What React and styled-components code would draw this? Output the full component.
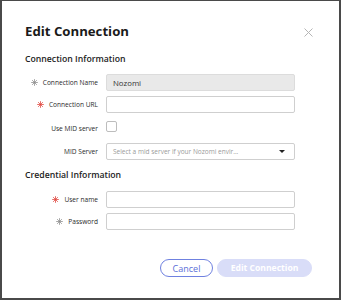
import React from "react";
import styled, { createGlobalStyle } from "styled-components";

const Global = createGlobalStyle`
  html, body {
    margin: 0;
    padding: 0;
    background: #ffffff;
  }
  body {
    font-family: "Open Sans", "Noto Sans", sans-serif;
  }
`;

const Frame = styled.div`
  box-sizing: border-box;
  width: 341px;
  height: 300px;
  border-style: solid;
  border-color: #4a4a4a;
  border-width: 1px 2px 2px 2px;
  background: #fff;
  padding: 0 0 0 23px;
  display: flex;
  flex-direction: column;
`;

const Header = styled.div`
  display: flex;
  align-items: center;
  justify-content: space-between;
  height: 20px;
  margin-top: 20px;
  padding-right: 26px;
`;

const Title = styled.h1`
  margin: 0;
  font-size: 13.2px;
  line-height: 20px;
  font-weight: 700;
  color: #1a1a1a;
`;

const Close = styled.button`
  border: 0;
  background: none;
  padding: 0;
  width: 9px;
  height: 9px;
  display: flex;
  margin-top: 2px;
  cursor: pointer;
`;

const Section = styled.h2`
  margin: ${(p) => p.$top}px 0 0 0;
  font-size: 8.7px;
  line-height: 16px;
  font-weight: 600;
  color: #222;
`;

const Rows = styled.div`
  display: grid;
  grid-template-columns: 73px 189px;
  column-gap: 8px;
  row-gap: 5px;
  margin-top: ${(p) => p.$top}px;
  align-items: center;
`;

const Label = styled.label`
  display: flex;
  align-items: center;
  justify-content: flex-end;
  gap: 5px;
  font-size: 6.6px;
  color: #2a2a2a;
  height: ${(p) => p.$h || 17}px;
  white-space: nowrap;
`;

const Star = styled.svg`
  width: 7px;
  height: 7px;
  flex: none;
`;

const Input = styled.div`
  box-sizing: border-box;
  height: 17px;
  border: 1px solid ${(p) => (p.$disabled ? "#dcdcdc" : "#cfcfcf")};
  background: ${(p) => (p.$disabled ? "#e9e9e9" : "#fff")};
  border-radius: 2px;
  padding: 0 6px;
  display: flex;
  align-items: center;
  font-size: 7.8px;
  color: #333;
`;

const Select = styled(Input)`
  justify-content: space-between;
  color: #9a9a9a;
  font-size: 6.5px;
`;

const Caret = styled.span`
  width: 0;
  height: 0;
  border-left: 3px solid transparent;
  border-right: 3px solid transparent;
  border-top: 3.5px solid #222;
  margin-right: 3px;
`;

const Check = styled.div`
  box-sizing: border-box;
  width: 11px;
  height: 11px;
  border: 1px solid #bdbdbd;
  border-radius: 2px;
  background: #fff;
  align-self: start;
  margin-top: 3px;
`;

const Footer = styled.div`
  display: flex;
  gap: 4px;
  margin-top: 29px;
  margin-left: 135px;
`;

const Btn = styled.button`
  box-sizing: border-box;
  height: 18px;
  border-radius: 9px;
  padding: 0;
  width: ${(p) => p.$w}px;
  font-family: inherit;
  font-size: ${(p) => (p.$primary ? 8.6 : 9)}px;
  font-weight: ${(p) => (p.$primary ? 700 : 400)};
  color: ${(p) => (p.$primary ? "#ffffff" : "#5b6fd8")};
  background: ${(p) => (p.$primary ? "#d9ddf8" : "#fff")};
  border: 1px solid ${(p) => (p.$primary ? "#d9ddf8" : "#6f81e0")};
  cursor: pointer;
`;

function Asterisk({ red }) {
  const c = red ? "#e0443c" : "#8c8c8c";
  return (
    <Star viewBox="0 0 10 10">
      <g stroke={c} strokeWidth="1.1" strokeLinecap="round">
        <line x1="5" y1="0.8" x2="5" y2="9.2" />
        <line x1="0.8" y1="5" x2="9.2" y2="5" />
        <line x1="2" y1="2" x2="8" y2="8" />
        <line x1="8" y1="2" x2="2" y2="8" />
      </g>
    </Star>
  );
}

function Field({ label, req, red, children, h }) {
  return (
    <>
      <Label $h={h}>
        {req && <Asterisk red={red} />}
        {label}
      </Label>
      {children}
    </>
  );
}

export default function App() {
  return (
    <Frame>
      <Global />
      <Header>
        <Title>Edit Connection</Title>
        <Close aria-label="close">
          <svg viewBox="0 0 9 9" width="9" height="9">
            <path d="M0.5 0.5L8.5 8.5M8.5 0.5L0.5 8.5" stroke="#b5b5b5" strokeWidth="1" />
          </svg>
        </Close>
      </Header>

      <Section $top={10}>Connection Information</Section>
      <Rows $top={7}>
        <Field label="Connection Name" req>
          <Input $disabled>Nozomi</Input>
        </Field>
        <Field label="Connection URL" req red>
          <Input />
        </Field>
        <Field label="Use MID server" h={20}>
          <Check />
        </Field>
        <Field label="MID Server">
          <Select>
            Select a mid server if your Nozomi envir...
            <Caret />
          </Select>
        </Field>
      </Rows>

      <Section $top={7}>Credential Information</Section>
      <Rows $top={8}>
        <Field label="User name" req red>
          <Input />
        </Field>
        <Field label="Password" req>
          <Input />
        </Field>
      </Rows>

      <Footer>
        <Btn $w={53}>Cancel</Btn>
        <Btn $primary $w={95}>Edit Connection</Btn>
      </Footer>
    </Frame>
  );
}
